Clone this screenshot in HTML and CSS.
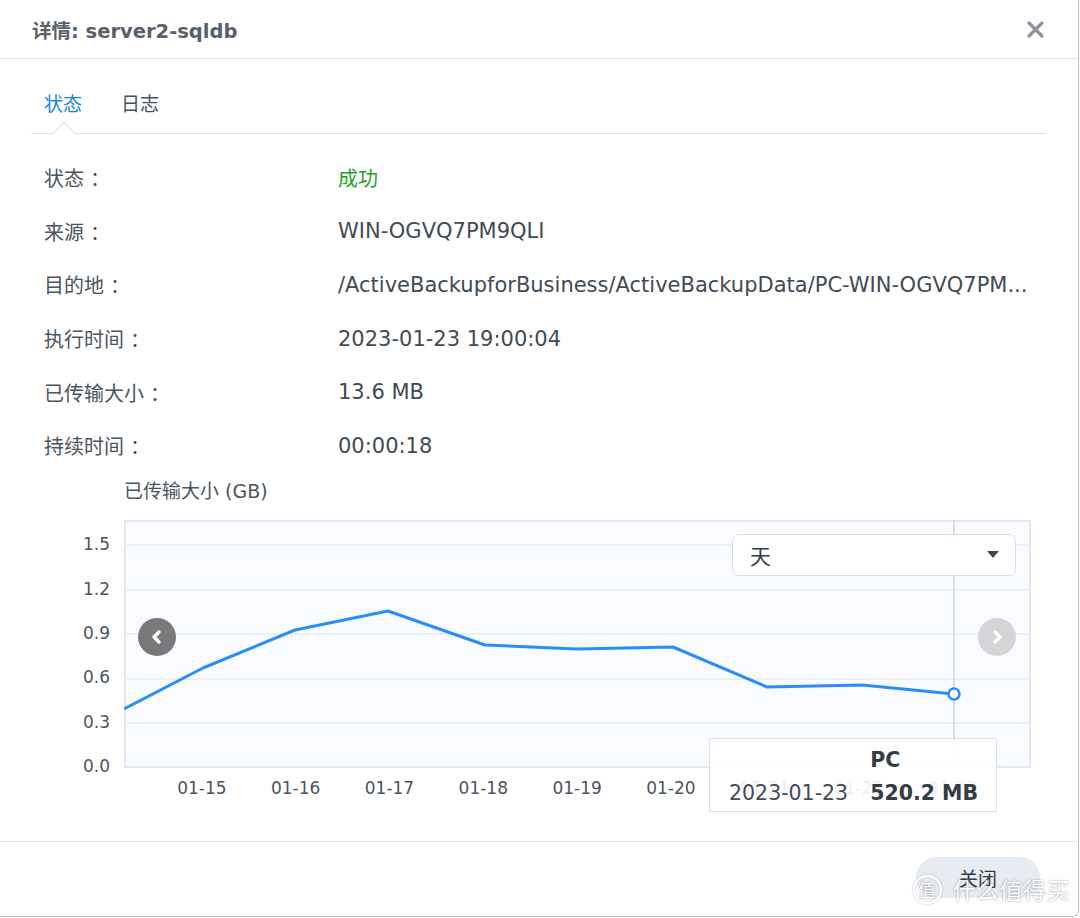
FILE: index.html
```html
<!DOCTYPE html>
<html lang="zh-CN">
<head>
<meta charset="utf-8">
<title>详情: server2-sqldb</title>
<link rel="stylesheet" href="styles.css">
</head>
<body>
<div class="dialog">
  <header class="hd">
    <div class="title"><span class="title-cjk">详情: </span>server2-sqldb</div>
    <button class="close" aria-label="关闭">
      <svg width="17" height="17" viewBox="0 0 17 17"><path d="M2 2 L15 15 M15 2 L2 15" stroke="#8d949b" stroke-width="3.2" stroke-linecap="round"/></svg>
    </button>
  </header>

  <main class="body">
    <nav class="tabs">
      <span class="tab active">状态</span>
      <span class="tab">日志</span>
    </nav>

    <dl class="info">
      <div class="row"><dt>状态<span class="colon">：</span></dt><dd class="ok">成功</dd></div>
      <div class="row"><dt>来源<span class="colon">：</span></dt><dd>WIN-OGVQ7PM9QLI</dd></div>
      <div class="row"><dt>目的地<span class="colon">：</span></dt><dd>/ActiveBackupforBusiness/ActiveBackupData/PC-WIN-OGVQ7PM...</dd></div>
      <div class="row"><dt>执行时间<span class="colon">：</span></dt><dd>2023-01-23 19:00:04</dd></div>
      <div class="row"><dt>已传输大小<span class="colon">：</span></dt><dd>13.6 MB</dd></div>
      <div class="row"><dt>持续时间<span class="colon">：</span></dt><dd>00:00:18</dd></div>
    </dl>

    <section class="chart">
      <div class="chart-title">已传输大小 (GB)</div>
      <div class="chart-grid">
        <div class="yaxis">
          <span>1.5</span><span>1.2</span><span>0.9</span><span>0.6</span><span>0.3</span><span>0.0</span>
        </div>
        <div class="plot">
          <svg class="plot-svg" width="907" height="248" viewBox="0 0 907 248">
            <g stroke="#e4ebf2" stroke-width="1.5">
              <line x1="0" y1="25" x2="907" y2="25"/>
              <line x1="0" y1="70" x2="907" y2="70"/>
              <line x1="0" y1="114" x2="907" y2="114"/>
              <line x1="0" y1="159" x2="907" y2="159"/>
              <line x1="0" y1="203" x2="907" y2="203"/>
            </g>
            <line x1="830" y1="0" x2="830" y2="248" stroke="#c9d4df" stroke-width="1.5"/>
            <polyline fill="none" stroke="#2b8ef7" stroke-width="3" stroke-linejoin="round"
              points="0,189 79,148 171,110 264,91 361,125 453,129 549,127 643,167 738,165 830,174"/>
            <circle cx="830" cy="174" r="5.5" fill="#fff" stroke="#2b8ef7" stroke-width="2.5"/>
          </svg>

          <button class="nav prev" aria-label="上一页">
            <svg width="14" height="16" viewBox="0 0 14 16"><path d="M9 3 L4 8 L9 13" fill="none" stroke="#fff" stroke-width="3.4" stroke-linecap="round" stroke-linejoin="round"/></svg>
          </button>
          <button class="nav next" aria-label="下一页">
            <svg width="14" height="16" viewBox="0 0 14 16"><path d="M5 3 L10 8 L5 13" fill="none" stroke="#fff" stroke-width="3.4" stroke-linecap="round" stroke-linejoin="round"/></svg>
          </button>

          <div class="select">
            <span>天</span>
            <i class="caret"></i>
          </div>

          <div class="tip">
            <span></span><b>PC</b>
            <span>2023-01-23</span><b>520.2 MB</b>
          </div>
        </div>
        <div></div>
        <div class="xaxis">
          <span>01-15</span><span>01-16</span><span>01-17</span><span>01-18</span><span>01-19</span><span>01-20</span><span>01-21</span><span>01-22</span><span>01-23</span>
        </div>
      </div>
    </section>
  </main>

  <footer class="ft">
    <button class="btn">关闭</button>
  </footer>

  <div class="watermark">
    <span class="wm-badge">值</span>
    <span class="wm-text">什么值得买</span>
  </div>
</div>
</body>
</html>
```

FILE: styles.css
```css
* {
  box-sizing: border-box;
  margin: 0;
  padding: 0;
}

html, body {
  background: #ffffff;
}

body {
  width: 1080px;
  height: 918px;
  overflow: hidden;
  font-family: "DejaVu Sans", "Noto Sans CJK SC", sans-serif;
  color: #414b55;
}

.dialog {
  position: relative;
  width: 1079px;
  height: 917px;
  display: flex;
  flex-direction: column;
  background: #ffffff;
  border-right: 1px solid #bdbdbd;
  border-bottom: 1px solid #bdbdbd;
  border-bottom-right-radius: 6px;
}

/* header */
.hd {
  height: 59px;
  flex: none;
  display: flex;
  align-items: center;
  justify-content: space-between;
  padding: 0 34px 0 32px;
  border-bottom: 1px solid #dde5ee;
}

.title {
  font-size: 19.5px;
  font-weight: bold;
  color: #58616b;
  white-space: pre;
}

.title-cjk {
  font-weight: 600;
}

.close {
  border: 0;
  background: none;
  width: 17px;
  height: 17px;
  display: flex;
}

/* body */
.body {
  flex: 1;
  padding: 0 32px 0 31px;
}

.tabs {
  display: flex;
  gap: 13px;
  height: 75px;
  border-bottom: 1px solid #d9e1ea;
}

.tab {
  position: relative;
  padding: 33px 13px 0;
  font-size: 19px;
  line-height: 24px;
  color: #48525c;
}

.tab.active {
  color: #1585e8;
}

.tab.active::after {
  content: "";
  position: absolute;
  left: calc(50% - 7.5px);
  bottom: -8px;
  width: 15px;
  height: 15px;
  background: #ffffff;
  border-left: 1px solid #d9e1ea;
  border-top: 1px solid #d9e1ea;
  transform: rotate(45deg);
}

.info {
  padding-top: 17px;
}

.row {
  display: grid;
  grid-template-columns: 294px 1fr;
  align-items: center;
  height: 53.6px;
  padding-left: 13px;
}

.row dt {
  font-size: 20px;
  color: #4b555f;
}

.colon {
  margin-left: 6px;
}

.row dd {
  font-size: 21px;
  color: #414b55;
  white-space: nowrap;
  overflow: hidden;
}

.row dd.ok {
  font-size: 20px;
  color: #1fa21f;
}

/* chart */
.chart {
  margin-top: 6px;
}

.chart-title {
  padding-left: 93px;
  font-size: 19px;
  line-height: 24px;
  color: #4b555f;
  margin-bottom: 17px;
}

.chart-grid {
  display: grid;
  grid-template-columns: 93px 907px;
}

.yaxis {
  height: 248px;
  padding-top: 2.8px;
  padding-right: 14px;
  text-align: right;
  font-size: 17px;
  color: #4b555f;
}

.yaxis span {
  display: block;
  height: 44.3px;
  line-height: 44.3px;
}

.plot {
  position: relative;
  height: 248px;
  border: 2px solid #dfe7f0;
  background: #f9fbfe;
}

.plot-svg {
  position: absolute;
  left: -2px;
  top: -2px;
  display: block;
}

.nav {
  position: absolute;
  top: 96px;
  width: 38px;
  height: 38px;
  border: 0;
  border-radius: 50%;
  display: flex;
  align-items: center;
  justify-content: center;
}

.nav.prev {
  left: 12px;
  background: #78797b;
}

.nav.next {
  left: 852px;
  background: #d3d5d7;
}

.select {
  position: absolute;
  left: 606px;
  top: 12px;
  width: 284px;
  height: 42px;
  background: #ffffff;
  border: 1.5px solid #d6dfe8;
  border-radius: 7px;
  display: flex;
  align-items: center;
  justify-content: space-between;
  padding: 0 16px 0 17px;
  font-size: 21px;
  color: #333d47;
}

.caret {
  width: 0;
  height: 0;
  border-left: 6px solid transparent;
  border-right: 6px solid transparent;
  border-top: 7px solid #45494e;
}

.tip {
  position: absolute;
  z-index: 2;
  left: 583px;
  top: 216px;
  width: 288px;
  height: 74px;
  background: rgba(255, 255, 255, 0.9);
  border: 1.5px solid #d8e1ea;
  padding: 5px 0 0 19px;
  display: grid;
  grid-template-columns: auto auto;
  justify-content: start;
  column-gap: 22px;
  font-size: 20.5px;
  line-height: 32px;
  color: #414b55;
}

.tip b {
  color: #333d47;
}

.xaxis {
  display: flex;
  padding-left: 31px;
  font-size: 17px;
  line-height: 40px;
  color: #4b555f;
}

.xaxis span {
  width: 93.8px;
  flex: none;
  text-align: center;
}

/* footer */
.ft {
  flex: none;
  height: 75px;
  border-top: 1px solid #e3e9ef;
  display: flex;
  justify-content: flex-end;
  padding: 15px 38px 0 0;
}

.btn {
  width: 124px;
  height: 41px;
  border: 0;
  border-radius: 21px;
  background: #e6ecf2;
  font-family: "Noto Sans CJK SC", sans-serif;
  font-size: 19px;
  color: #2f3a44;
}

/* watermark overlay */
.watermark {
  position: absolute;
  right: 8px;
  bottom: 10px;
  display: flex;
  align-items: center;
  gap: 11px;
  font-family: "Noto Sans CJK SC", sans-serif;
  color: #ffffff;
  pointer-events: none;
}

.wm-badge {
  width: 29px;
  height: 29px;
  border-radius: 50%;
  border: 2px solid #ffffff;
  box-shadow: 0 0 2px rgba(0, 0, 0, 0.35), inset 0 0 2px rgba(0, 0, 0, 0.25);
  display: flex;
  align-items: center;
  justify-content: center;
  font-size: 18px;
  text-shadow: 0 0 2px rgba(0, 0, 0, 0.45);
}

.wm-text {
  font-size: 23px;
  letter-spacing: 0.5px;
  text-shadow: 0 0 2px rgba(0, 0, 0, 0.45);
}
```
